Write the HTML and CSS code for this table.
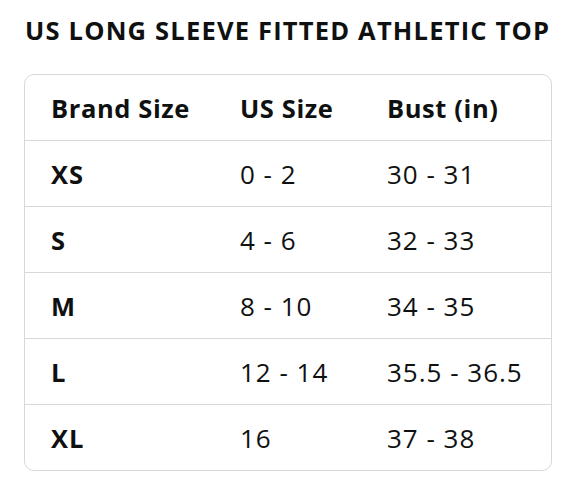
FILE: index.html
```html
<!DOCTYPE html>
<html>
  <head>
    <meta charset="utf-8" />
    <title>US Long Sleeve Fitted Athletic Top</title>
    <link rel="stylesheet" href="styles.css">
  </head>
  <body>
    <div class="page">
      <h1 class="title">US LONG SLEEVE FITTED ATHLETIC TOP</h1>

      <div class="chart">
        <table class="size-table">
          <thead>
            <tr>
              <th>Brand Size</th>
              <th>US Size</th>
              <th>Bust (in)</th>
            </tr>
          </thead>
          <tbody>
            <tr><th>XS</th><td>0 - 2</td><td>30 - 31</td></tr>
            <tr><th>S</th><td>4 - 6</td><td>32 - 33</td></tr>
            <tr><th>M</th><td>8 - 10</td><td>34 - 35</td></tr>
            <tr><th>L</th><td>12 - 14</td><td>35.5 - 36.5</td></tr>
            <tr><th>XL</th><td>16</td><td>37 - 38</td></tr>
          </tbody>
        </table>
      </div>
    </div>
  </body>
</html>
```

FILE: styles.css
```css
body {
  margin: 0;
  background: #fff;
  color: #0f1111;
  font-family: "Open Sans", "Noto Sans", Arial, sans-serif;
}

.page {
  padding: 13px 26px 0 24px;
}

.title {
  margin: 0 0 27px 1px;
  font-size: 25.5px;
  font-weight: 700;
  line-height: 34px;
  letter-spacing: 1.2px;
  white-space: nowrap;
}

.chart {
  width: 526px;
  border: 1px solid #d5d9d9;
  border-radius: 10px;
  overflow: hidden;
}

.size-table {
  width: 100%;
  border-collapse: collapse;
  font-size: 26px;
  letter-spacing: 1px;
}

.size-table th,
.size-table td {
  height: 65px;
  padding: 0;
  text-align: left;
  vertical-align: middle;
  border-bottom: 1px solid #d5d9d9;
}

.size-table tbody tr:last-child th,
.size-table tbody tr:last-child td {
  border-bottom: none;
}

.size-table th {
  font-weight: 700;
  font-size: 25.5px;
}

.size-table thead th {
  letter-spacing: 0.6px;
}

.size-table td {
  font-weight: 400;
}

.size-table tr > :first-child {
  width: 189px;
  padding-left: 26px;
}

.size-table tr > :nth-child(2) {
  width: 147px;
}
```
